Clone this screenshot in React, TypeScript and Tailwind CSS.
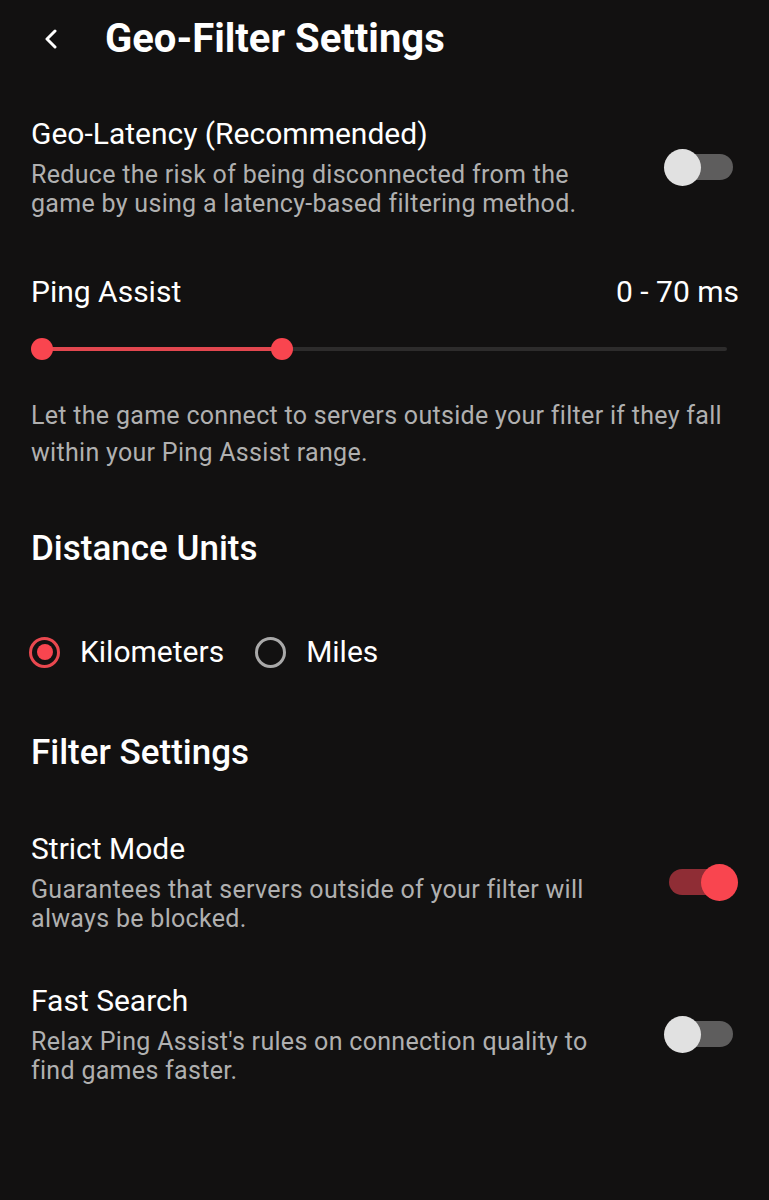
import { useState } from "react";

const font = { fontFamily: "Roboto, 'Noto Sans', sans-serif" };

function Toggle({ on, onChange }: { on: boolean; onChange: () => void }) {
  return (
    <button
      onClick={onChange}
      className="relative w-[74px] h-[38px] shrink-0 flex items-center"
      aria-pressed={on}>
      <span
        className={`absolute left-[5px] w-[64px] h-[26px] rounded-full ${
          on ? "bg-[#8f2d35]" : "bg-[#5e5d5d]"
        }`}
      />
      <span
        className={`absolute w-[37px] h-[37px] rounded-full ${
          on ? "right-0 bg-[#f9454f]" : "left-0 bg-[#e1e1e1]"
        }`}
      />
    </button>
  );
}

function Radio({ checked, label, onClick }: { checked: boolean; label: string; onClick: () => void }) {
  return (
    <button onClick={onClick} className="flex items-center h-[36px]">
      <span
        className={`w-[31px] h-[31px] rounded-full border-[3px] flex items-center justify-center ${
          checked ? "border-[#e9484f]" : "border-[#a9a9a9]"
        }`}>
        {checked && <span className="w-[16px] h-[16px] rounded-full bg-[#f9454f]" />}
      </span>
      <span className="ml-[20px] text-[30px] text-white leading-[36px]">{label}</span>
    </button>
  );
}

function SettingRow({
  title,
  desc,
  on,
  onChange,
}: {
  title: string;
  desc: React.ReactNode;
  on: boolean;
  onChange: () => void;
}) {
  return (
    <div className="flex items-center justify-between">
      <div>
        <p className="text-[30px] leading-[36px] text-white">{title}</p>
        <p className="mt-[8px] text-[25px] leading-[29px] text-[#b0b0b0] tracking-[0.3px]">{desc}</p>
      </div>
      <Toggle on={on} onChange={onChange} />
    </div>
  );
}

export default function App() {
  const [geo, setGeo] = useState(false);
  const [strict, setStrict] = useState(true);
  const [fast, setFast] = useState(false);
  const [unit, setUnit] = useState("km");

  return (
    <div className="min-h-[1200px] w-full bg-[#121111] text-white" style={font}>
      {/* header */}
      <div className="flex items-center h-[78px] pl-[44px]">
        <svg width="14" height="20" viewBox="0 0 14 20" fill="none" className="shrink-0">
          <path d="M11 2 L3 10 L11 18" stroke="white" strokeWidth="3" strokeLinecap="round" strokeLinejoin="round" />
        </svg>
        <h1 className="ml-[47px] text-[40px] font-bold leading-none">Geo-Filter Settings</h1>
      </div>

      <div className="pl-[31px] pr-[31px]">
        <div className="mt-[38px]">
          <SettingRow
            title="Geo-Latency (Recommended)"
            desc={
              <>
                Reduce the risk of being disconnected from the
                <br />
                game by using a latency-based filtering method.
              </>
            }
            on={geo}
            onChange={() => setGeo(!geo)}
          />
        </div>

        {/* ping assist */}
        <div className="mt-[56px] flex items-center justify-between">
          <span className="text-[30px] leading-[36px]">Ping Assist</span>
          <span className="text-[30px] leading-[36px] -mr-[1px]">0 - 70 ms</span>
        </div>
        <div className="relative mt-[28px] h-[22px] mr-[11px]">
          <div className="absolute left-[10px] right-0 top-[9px] h-[4px] rounded-full bg-[#2d2c2c]" />
          <div className="absolute left-[10px] w-[241px] top-[9px] h-[4px] bg-[#e2474f]" />
          <div className="absolute left-0 top-0 w-[22px] h-[22px] rounded-full bg-[#f9454f]" />
          <div className="absolute left-[240px] top-0 w-[22px] h-[22px] rounded-full bg-[#f9454f]" />
        </div>
        <p className="mt-[37px] text-[25px] leading-[37px] text-[#b0b0b0] tracking-[0.3px]">
          Let the game connect to servers outside your filter if they fall
          <br />
          within your Ping Assist range.
        </p>

        {/* distance units */}
        <h2 className="mt-[58px] text-[35px] font-medium leading-[40px]">Distance Units</h2>
        <div className="mt-[65px] flex items-center gap-[31px] -ml-[2px]">
          <Radio checked={unit === "km"} label="Kilometers" onClick={() => setUnit("km")} />
          <Radio checked={unit === "mi"} label="Miles" onClick={() => setUnit("mi")} />
        </div>

        {/* filter settings */}
        <h2 className="mt-[63px] text-[35px] font-medium leading-[40px]">Filter Settings</h2>
        <div className="mt-[58px]">
          <SettingRow
            title="Strict Mode"
            desc={
              <>
                Guarantees that servers outside of your filter will
                <br />
                always be blocked.
              </>
            }
            on={strict}
            onChange={() => setStrict(!strict)}
          />
        </div>
        <div className="mt-[50px]">
          <SettingRow
            title="Fast Search"
            desc={
              <>
                Relax Ping Assist's rules on connection quality to
                <br />
                find games faster.
              </>
            }
            on={fast}
            onChange={() => setFast(!fast)}
          />
        </div>
      </div>
    </div>
  );
}
